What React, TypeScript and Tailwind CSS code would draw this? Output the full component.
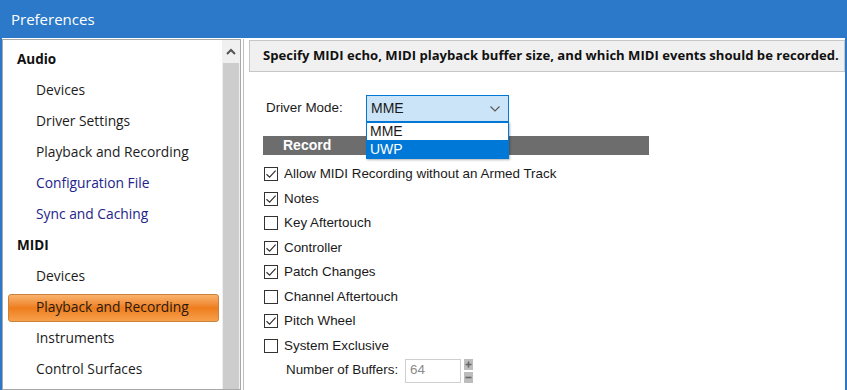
import React from 'react'

const navFont = { fontFamily: '"Open Sans", "Noto Sans", sans-serif' }
const formFont = { fontFamily: '"Liberation Sans", Arial, sans-serif' }

type NavItem = { label: string; kind: 'head' | 'item' | 'link' | 'selected' }

const nav: NavItem[] = [
  { label: 'Audio', kind: 'head' },
  { label: 'Devices', kind: 'item' },
  { label: 'Driver Settings', kind: 'item' },
  { label: 'Playback and Recording', kind: 'item' },
  { label: 'Configuration File', kind: 'link' },
  { label: 'Sync and Caching', kind: 'link' },
  { label: 'MIDI', kind: 'head' },
  { label: 'Devices', kind: 'item' },
  { label: 'Playback and Recording', kind: 'selected' },
  { label: 'Instruments', kind: 'item' },
  { label: 'Control Surfaces', kind: 'item' },
]

const checks = [
  { label: 'Allow MIDI Recording without an Armed Track', on: true },
  { label: 'Notes', on: true },
  { label: 'Key Aftertouch', on: false },
  { label: 'Controller', on: true },
  { label: 'Patch Changes', on: true },
  { label: 'Channel Aftertouch', on: false },
  { label: 'Pitch Wheel', on: true },
  { label: 'System Exclusive', on: false },
]

function Check({ on }: { on: boolean }) {
  return (
    <span className="w-[14px] h-[14px] border border-[#333] bg-white flex items-center justify-center shrink-0">
      {on && (
        <svg width="12" height="12" viewBox="0 0 12 12">
          <path d="M1.5 6.2 L4.6 9.2 L10.6 2.6" fill="none" stroke="#333" strokeWidth="1.2" />
        </svg>
      )}
    </span>
  )
}

function NavRow({ item }: { item: NavItem }) {
  if (item.kind === 'head') {
    return (
      <div className="h-[31px] flex items-center pl-[14px] pb-[1px] font-bold text-[13.5px] text-[#111]">{item.label}</div>
    )
  }
  if (item.kind === 'selected') {
    return (
      <div className="h-[31px] flex items-center pl-[5px] pr-[3px]">
        <div className="h-[28px] w-full rounded-[3px] border border-[#c8823c] bg-gradient-to-b from-[#f9b36b] via-[#ee7d1a] to-[#f7a04a] flex items-center pl-[27px] text-[13.8px] text-[#2a1a10]">
          {item.label}
        </div>
      </div>
    )
  }
  return (
    <div
      className={`h-[31px] flex items-center pl-[33px] text-[13.8px] ${
        item.kind === 'link' ? 'text-[#23238a]' : 'text-[#1c1c1c]'
      }`}
    >
      {item.label}
    </div>
  )
}

export default function App() {
  return (
    <div className="w-[847px] h-[390px] overflow-hidden bg-white flex flex-col border-x-2 border-[#2b79c8]">
      {/* Title */}
      <div className="h-[38px] bg-[#2b79c8] flex items-center pl-[9px] text-white text-[15px] shrink-0" style={navFont}>
        Preferences
      </div>

      <div className="flex flex-1 min-h-0">
        {/* Sidebar */}
        <div className="w-[239px] border border-[#a8a8a8] flex mt-[1px] shrink-0" style={navFont}>
          <div className="flex-1 pt-[4px]">
            {nav.map((n, i) => (
              <NavRow key={i} item={n} />
            ))}
          </div>
          <div className="w-[18px] flex flex-col bg-[#f0f0f0]">
            <div className="h-[23px] flex items-center justify-center">
              <svg width="10" height="8" viewBox="0 0 10 8">
                <path d="M1 6 L5 2 L9 6" fill="none" stroke="#555" strokeWidth="2" />
              </svg>
            </div>
            <div className="flex-1 bg-[#cdcdcd] mx-[1px]" />
          </div>
        </div>
        <div className="w-[1px] bg-[#bdbdbd] ml-[2px] mt-[1px]" />

        {/* Content */}
        <div className="flex-1 pl-[5px] pt-[2px] flex flex-col">
          <div
            className="h-[32px] border border-[#c6c6c6] bg-[#f0f0f0] flex items-center pl-[13px] font-bold text-[13.1px] text-[#111]"
            style={navFont}
          >
            Specify MIDI echo, MIDI playback buffer size, and which MIDI events should be recorded.
          </div>

          <div className="pl-[14px] pt-[23px] text-[13.4px] text-[#1a1a1a]" style={formFont}>
            <div className="flex items-center h-[27px]">
              <span className="w-[103px] pl-[3px]">Driver Mode:</span>
              <div className="relative w-[143px] h-[27px]">
                <div className="h-full border border-[#0078d7] bg-[#cce4f7] flex items-center pl-[4px] pr-[8px] justify-between text-[14px]">
                  <span>MME</span>
                  <svg width="10" height="6" viewBox="0 0 10 6">
                    <path d="M0.5 0.5 L5 5 L9.5 0.5" fill="none" stroke="#555" strokeWidth="1.1" />
                  </svg>
                </div>
                <div className="absolute left-0 top-[27px] w-full border border-[#0078d7] bg-white z-10 text-[14px] shadow-[1px_1px_2px_rgba(0,0,0,0.3)]">
                  <div className="h-[17px] pl-[3px] flex items-center">MME</div>
                  <div className="h-[18px] pl-[3px] flex items-center bg-[#0078d7] text-white">UWP</div>
                </div>
              </div>
            </div>

            <div className="mt-[14px] w-[386px] h-[19px] bg-[#6d6d6d] text-white font-bold text-[14px] flex items-center pl-[20px]">
              Record
            </div>

            <div className="mt-[7px] flex flex-col pl-[1px]">
              {checks.map((c) => (
                <div key={c.label} className="h-[24.5px] flex items-center gap-[6px]">
                  <Check on={c.on} />
                  <span>{c.label}</span>
                </div>
              ))}
            </div>

            <div className="flex items-center pl-[23px] h-[25px]">
              <span className="w-[119px]">Number of Buffers:</span>
              <div className="w-[56px] h-[24px] border border-[#cfcfcf] flex items-center pl-[4px] text-[#8a8a8a]">64</div>
              <div className="ml-[3px] flex flex-col gap-[2px]">
                <div className="w-[9px] h-[11px] bg-[#bdbdbd] flex items-center justify-center">
                  <svg width="7" height="7" viewBox="0 0 7 7">
                    <path d="M3.5 0.5 V6.5 M0.5 3.5 H6.5" stroke="#666" strokeWidth="1.6" />
                  </svg>
                </div>
                <div className="w-[9px] h-[11px] bg-[#bdbdbd] flex items-center justify-center">
                  <svg width="7" height="7" viewBox="0 0 7 7">
                    <path d="M0.5 3.5 H6.5" stroke="#666" strokeWidth="1.6" />
                  </svg>
                </div>
              </div>
            </div>
          </div>
        </div>
      </div>
    </div>
  )
}
